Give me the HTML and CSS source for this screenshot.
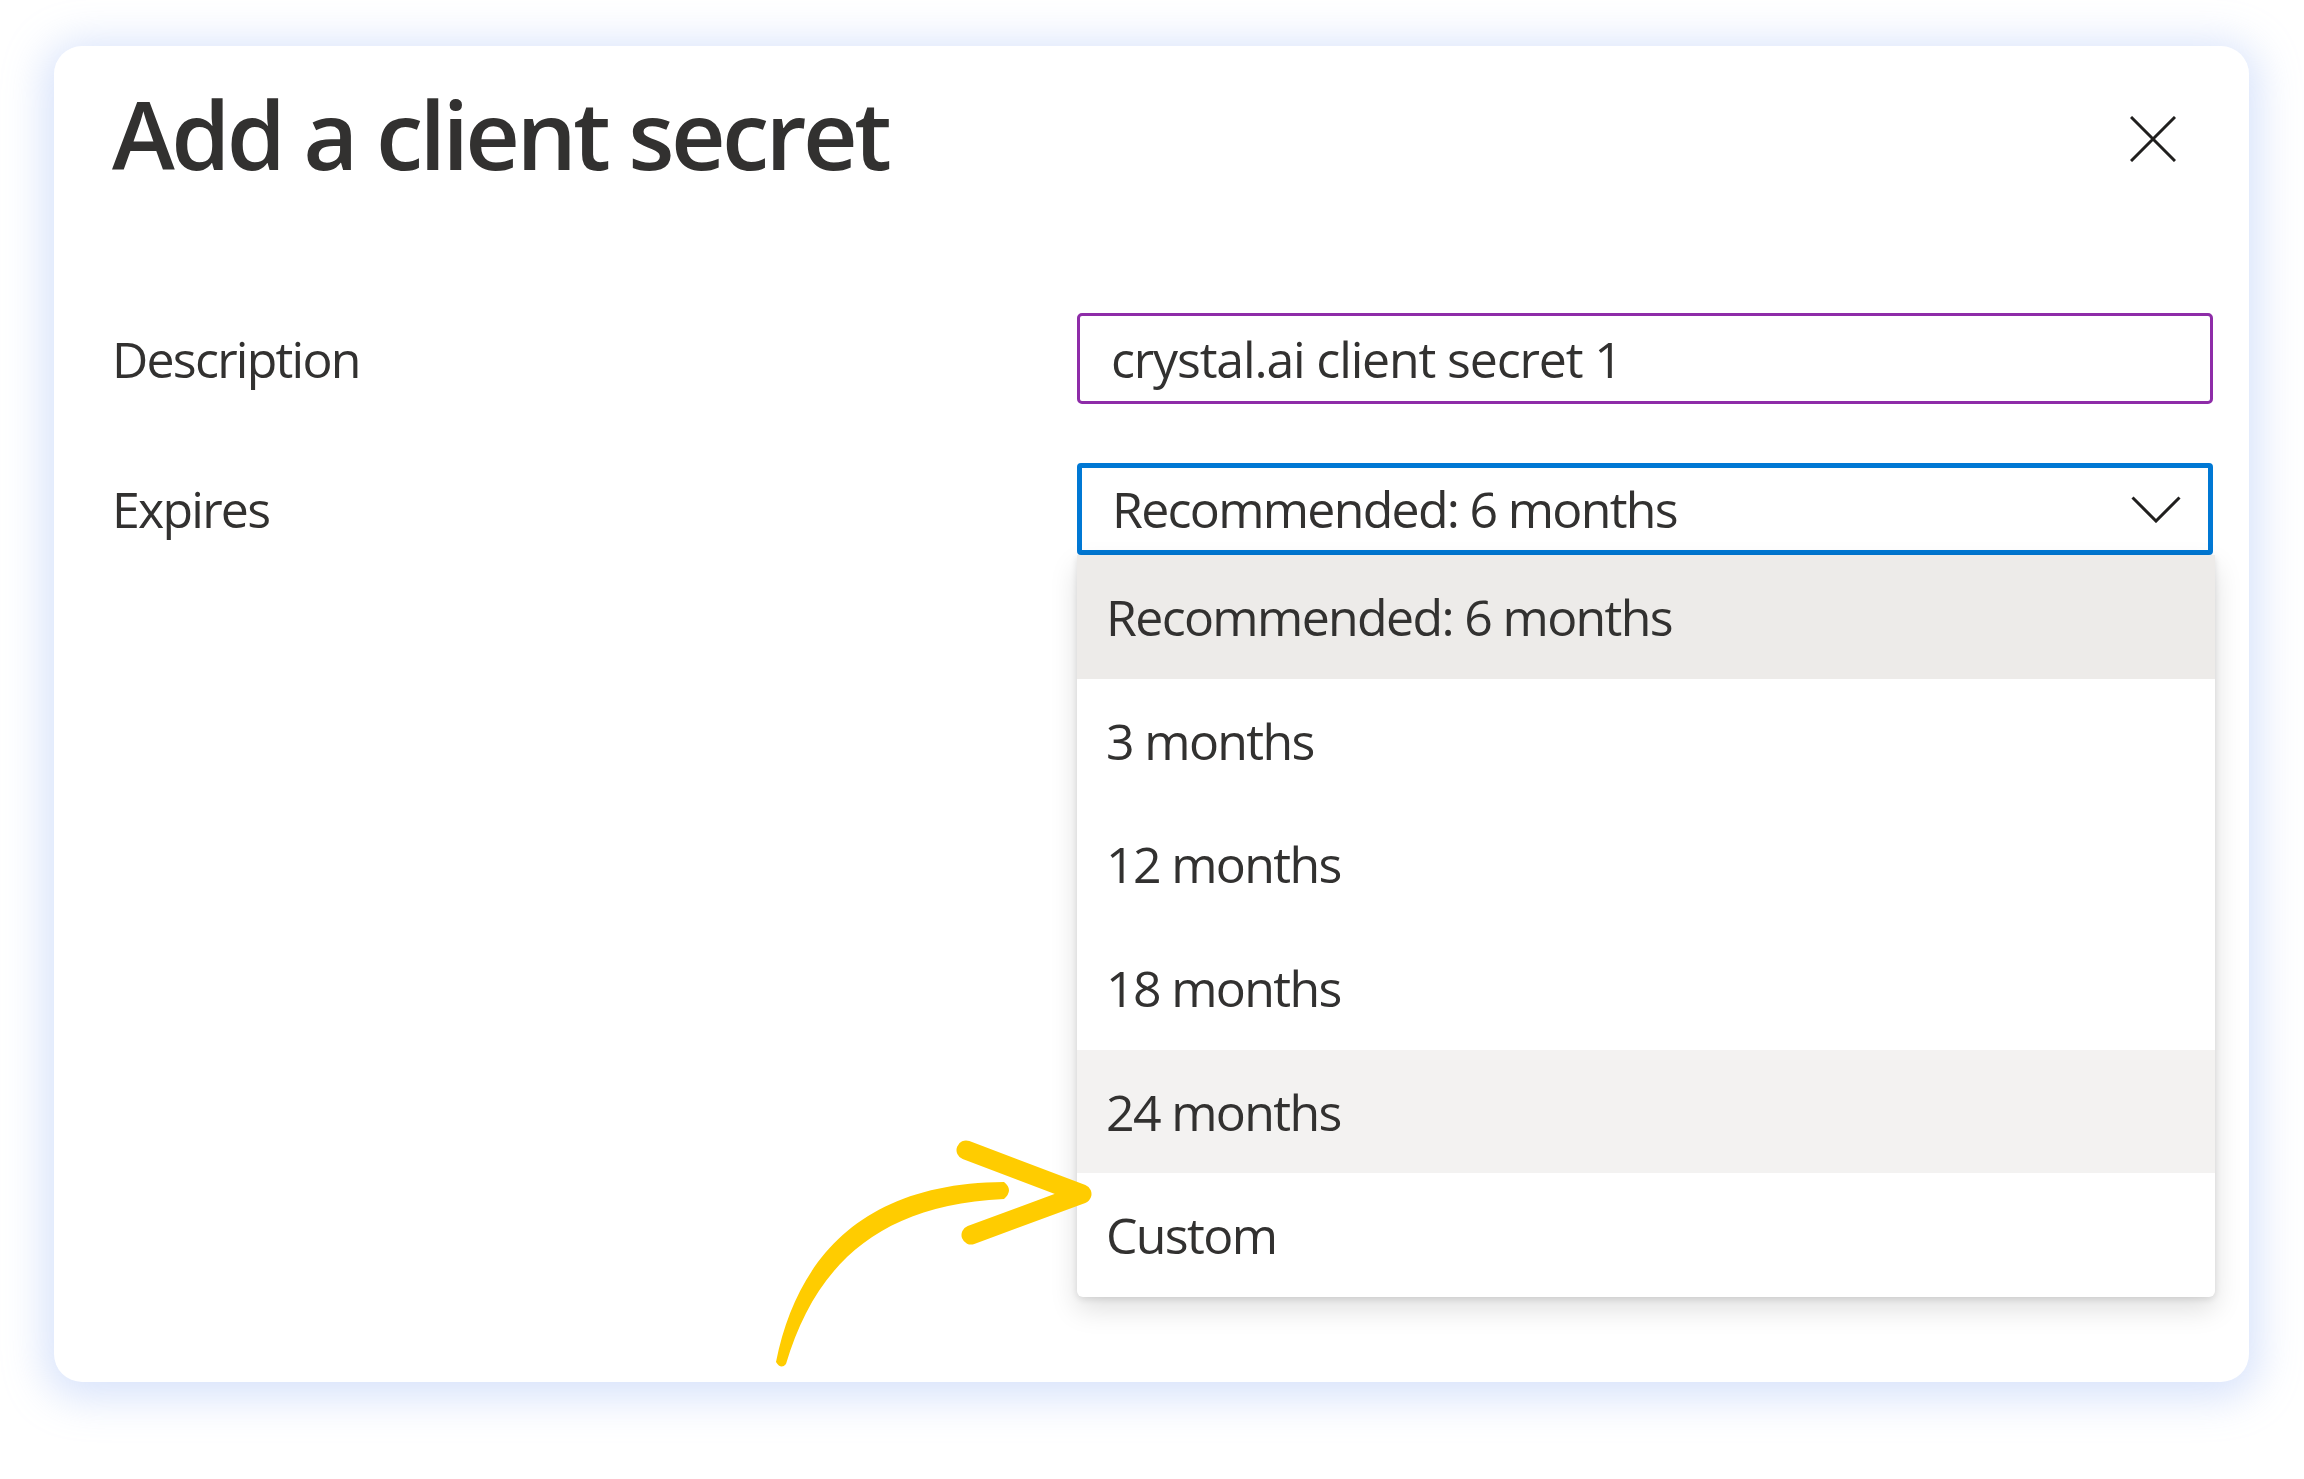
FILE: index.html
```html
<!DOCTYPE html>
<html lang="en">
<head>
<meta charset="utf-8">
<title>Add a client secret</title>
<link rel="stylesheet" href="styles.css">
</head>
<body>
<div class="page">
  <section class="card">
    <header class="card-header">
      <h1 class="title">Add a client secret</h1>
      <button class="close" aria-label="Close">
        <svg class="close-icon" viewBox="0 0 46 46" width="46" height="46">
          <path d="M1 1 L45 45 M45 1 L1 45" fill="none" stroke="#201f1e" stroke-width="3"/>
        </svg>
      </button>
    </header>
    <div class="form">
      <div class="row">
        <label class="label">Description</label>
        <div class="field">
          <div class="input">crystal.ai client secret 1</div>
        </div>
      </div>
      <div class="row">
        <label class="label">Expires</label>
        <div class="field">
          <div class="dropdown">
            <span class="dropdown-text">Recommended: 6 months</span>
            <svg class="chevron" viewBox="0 0 50 27" width="50" height="27">
              <path d="M1.5 1.5 L25 25 L48.5 1.5" fill="none" stroke="#201f1e" stroke-width="3"/>
            </svg>
          </div>
          <ul class="listbox">
            <li class="option selected">Recommended: 6 months</li>
            <li class="option">3 months</li>
            <li class="option">12 months</li>
            <li class="option">18 months</li>
            <li class="option hover">24 months</li>
            <li class="option">Custom</li>
          </ul>
        </div>
      </div>
    </div>
  </section>
  <svg class="annotation" viewBox="0 0 2304 1479" width="2304" height="1479">
    <path d="M776 1362 C797 1258 862 1183 1004 1182 Q1014 1190 1004 1199 C874 1205 814 1270 786 1364 Q781 1370 776 1362 Z" fill="#ffcc00"/>
    <path d="M966 1150 L1082 1194 L971 1235" fill="none" stroke="#ffcc00" stroke-width="19" stroke-linecap="round" stroke-linejoin="round"/>
  </svg>
</div>
</body>
</html>
```
FILE: styles.css
```css
html, body {
  margin: 0;
  padding: 0;
  background: #ffffff;
}

body {
  font-family: "Open Sans", "Noto Sans", sans-serif;
  color: #323130;
}

.page {
  position: relative;
  width: 2304px;
  height: 1479px;
  overflow: hidden;
  padding-top: 46px;
  box-sizing: border-box;
}

.card {
  margin-left: 54px;
  width: 2195px;
  height: 1336px;
  box-sizing: border-box;
  padding: 30px 36px 0 58px;
  background: #ffffff;
  border-radius: 28px;
  box-shadow: 0 6px 40px 10px rgba(203, 217, 250, 0.75);
}

.card-header {
  display: flex;
  justify-content: space-between;
  align-items: flex-start;
}

.title {
  margin: 0;
  font-size: 95px;
  font-weight: 600;
  line-height: 114px;
  letter-spacing: -3.6px;
  color: #323130;
}

.close {
  margin: 40px 37px 0 0;
  padding: 0;
  border: 0;
  background: transparent;
  display: flex;
}

.form {
  margin-top: 123px;
  display: flex;
  flex-direction: column;
  gap: 59px;
}

.row {
  display: grid;
  grid-template-columns: 965px 1136px;
  align-items: center;
}

.label {
  font-size: 50px;
  letter-spacing: -1.75px;
  line-height: 68px;
  padding-left: 0;
  align-self: center;
}

.field {
  position: relative;
}

.input {
  height: 91px;
  box-sizing: border-box;
  border: 3.5px solid #8e2ca8;
  border-radius: 5px;
  padding-left: 31px;
  display: flex;
  align-items: center;
  font-size: 50px;
  letter-spacing: -1.15px;
}

.dropdown {
  height: 92px;
  box-sizing: border-box;
  border: 5px solid #0078d4;
  border-radius: 4px;
  padding: 0 27px 0 30px;
  display: flex;
  align-items: center;
  justify-content: space-between;
  font-size: 50px;
  letter-spacing: -1.7px;
}

.chevron {
  display: block;
}

.listbox {
  position: absolute;
  top: 100%;
  left: 0;
  right: -2px;
  margin: 0;
  padding: 0;
  list-style: none;
  background: #ffffff;
  border-radius: 0 0 6px 6px;
  box-shadow: 0 12px 28px rgba(0, 0, 0, 0.13), 0 2px 7px rgba(0, 0, 0, 0.11);
  overflow: hidden;
  z-index: 2;
}

.option {
  height: 123.7px;
  box-sizing: border-box;
  padding-left: 29px;
  display: flex;
  align-items: center;
  font-size: 50px;
  letter-spacing: -1.65px;
  color: #323130;
}

.option.selected {
  background: #edebe9;
}

.option.hover {
  background: #f3f2f1;
}

.annotation {
  position: absolute;
  top: 0;
  left: 0;
  pointer-events: none;
  z-index: 3;
}
```
